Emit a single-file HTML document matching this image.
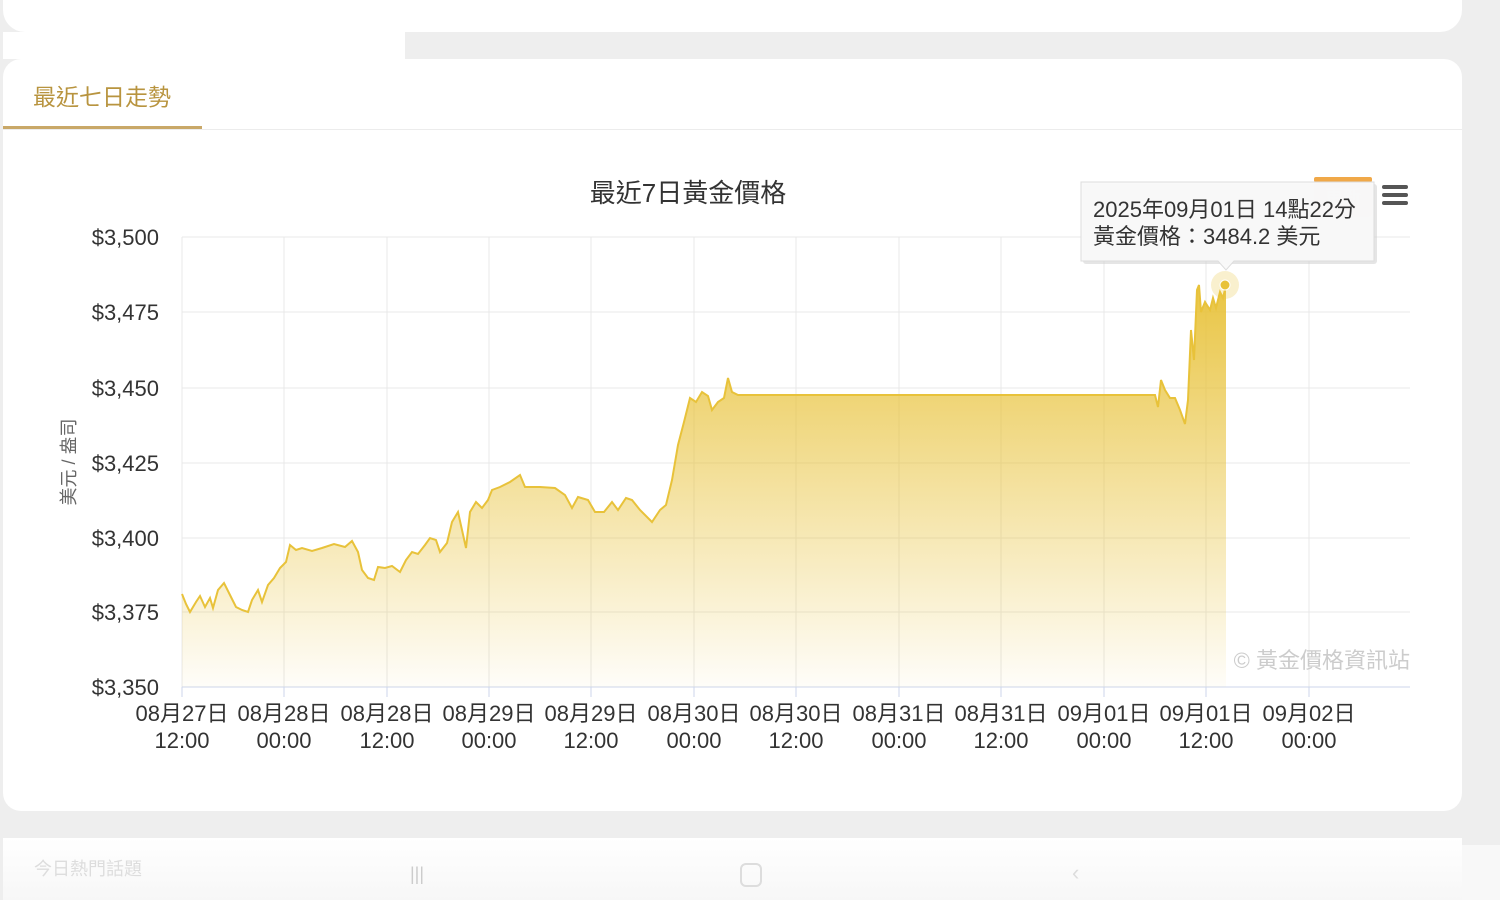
<!DOCTYPE html>
<html><head><meta charset="utf-8">
<style>
body{margin:0;width:1500px;height:900px;background:#eeeeee;font-family:"Liberation Sans","Noto Sans CJK TC",sans-serif;overflow:hidden;position:relative}
.top{position:absolute;left:3px;top:-20px;width:1459px;height:52px;background:#fff;border-radius:0 0 22px 22px}
.strip{position:absolute;left:3px;top:32px;width:402px;height:27px;background:#fff}
.card{position:absolute;left:3px;top:59px;width:1459px;height:752px;background:#fff;border-radius:18px}
.tab{position:absolute;left:33px;top:78px;font-size:23px;color:#b8943f;font-family:"Noto Sans CJK TC",sans-serif}
.tabline{position:absolute;left:3px;top:126px;width:199px;height:3px;background:#c9a868}
.sep{position:absolute;left:3px;top:129px;width:1459px;height:1px;background:#ececec}
.low{position:absolute;left:3px;top:838px;width:1459px;height:62px;background:linear-gradient(#fff,#f7f7f7)}
.low2{position:absolute;left:1462px;top:845px;width:38px;height:55px;background:#f8f8f8}
</style></head><body>
<div class="top"></div>
<div class="strip"></div>
<div class="card"></div>
<div class="tab">最近七日走勢</div>
<div class="tabline"></div>
<div class="sep"></div>
<div class="low"></div><div class="low2"></div>
<div style="position:absolute;left:34px;top:855px;font-size:18px;color:#ddd">今日熱門話題</div>
<div style="position:absolute;left:410px;top:864px;width:20px;height:20px;color:#ccc;font-size:18px">|||</div>
<div style="position:absolute;left:740px;top:863px;width:18px;height:20px;border:2px solid #ddd;border-radius:6px"></div>
<div style="position:absolute;left:1072px;top:860px;color:#ddd;font-size:22px">‹</div>
<svg width="1500" height="900" style="position:absolute;left:0;top:0" font-family="Liberation Sans, Noto Sans CJK TC, sans-serif">
<defs>
<linearGradient id="f" x1="0" y1="285" x2="0" y2="687" gradientUnits="userSpaceOnUse"><stop offset="0" stop-color="#e8c23a" stop-opacity="0.95"/><stop offset="1" stop-color="#e8c23a" stop-opacity="0.03"/></linearGradient></defs>
<g stroke="#e8e8e8" stroke-width="1">
<line x1="182" y1="237" x2="1410" y2="237"/><line x1="182" y1="312" x2="1410" y2="312"/><line x1="182" y1="388" x2="1410" y2="388"/><line x1="182" y1="463" x2="1410" y2="463"/><line x1="182" y1="538" x2="1410" y2="538"/><line x1="182" y1="612" x2="1410" y2="612"/>
<line x1="182" y1="237" x2="182" y2="687"/><line x1="284" y1="237" x2="284" y2="687"/><line x1="387" y1="237" x2="387" y2="687"/><line x1="489" y1="237" x2="489" y2="687"/><line x1="591" y1="237" x2="591" y2="687"/><line x1="694" y1="237" x2="694" y2="687"/><line x1="796" y1="237" x2="796" y2="687"/><line x1="899" y1="237" x2="899" y2="687"/><line x1="1001" y1="237" x2="1001" y2="687"/><line x1="1104" y1="237" x2="1104" y2="687"/><line x1="1206" y1="237" x2="1206" y2="687"/><line x1="1309" y1="237" x2="1309" y2="687"/>
</g>
<line x1="182" y1="687" x2="1410" y2="687" stroke="#ccd6eb"/>
<g stroke="#ccd6eb"><line x1="182" y1="687" x2="182" y2="697"/><line x1="284" y1="687" x2="284" y2="697"/><line x1="387" y1="687" x2="387" y2="697"/><line x1="489" y1="687" x2="489" y2="697"/><line x1="591" y1="687" x2="591" y2="697"/><line x1="694" y1="687" x2="694" y2="697"/><line x1="796" y1="687" x2="796" y2="697"/><line x1="899" y1="687" x2="899" y2="697"/><line x1="1001" y1="687" x2="1001" y2="697"/><line x1="1104" y1="687" x2="1104" y2="697"/><line x1="1206" y1="687" x2="1206" y2="697"/><line x1="1309" y1="687" x2="1309" y2="697"/></g>
<path d="M182,594 L186,604 L190,612 L196,602 L200,596 L205,607 L210,598 L213,608 L218,590 L224,583 L230,595 L236,607 L242,610 L248,612 L252,600 L258,590 L262,602 L268,585 L274,578 L280,568 L286,562 L290,545 L296,550 L302,548 L312,551 L322,548 L334,544 L345,547 L352,541 L358,552 L362,570 L368,578 L374,580 L378,567 L385,568 L392,566 L400,572 L406,560 L412,552 L418,554 L425,545 L430,538 L436,540 L440,552 L447,543 L452,522 L458,512 L462,530 L466,548 L470,512 L476,502 L482,508 L488,500 L492,490 L500,487 L510,482 L520,475 L525,487 L540,487 L555,488 L565,495 L572,508 L578,497 L588,500 L595,512 L604,512 L612,502 L618,510 L626,498 L632,500 L640,510 L652,522 L660,510 L666,505 L672,480 L678,445 L684,422 L690,398 L696,402 L702,392 L708,396 L712,410 L718,402 L724,398 L728,378 L732,392 L738,395 L1155,395 L1158,407 L1161,380 L1165,390 L1170,398 L1175,398 L1180,410 L1185,424 L1188,400 L1191,330 L1194,360 L1197,290 L1199,285 L1201,312 L1205,302 L1210,310 L1213,298 L1216,308 L1220,292 L1223,298 L1226,285 L1226,687 L182,687 Z" fill="url(#f)"/>
<path fill="none" stroke="#e8c23a" stroke-width="2" d="M182,594 L186,604 L190,612 L196,602 L200,596 L205,607 L210,598 L213,608 L218,590 L224,583 L230,595 L236,607 L242,610 L248,612 L252,600 L258,590 L262,602 L268,585 L274,578 L280,568 L286,562 L290,545 L296,550 L302,548 L312,551 L322,548 L334,544 L345,547 L352,541 L358,552 L362,570 L368,578 L374,580 L378,567 L385,568 L392,566 L400,572 L406,560 L412,552 L418,554 L425,545 L430,538 L436,540 L440,552 L447,543 L452,522 L458,512 L462,530 L466,548 L470,512 L476,502 L482,508 L488,500 L492,490 L500,487 L510,482 L520,475 L525,487 L540,487 L555,488 L565,495 L572,508 L578,497 L588,500 L595,512 L604,512 L612,502 L618,510 L626,498 L632,500 L640,510 L652,522 L660,510 L666,505 L672,480 L678,445 L684,422 L690,398 L696,402 L702,392 L708,396 L712,410 L718,402 L724,398 L728,378 L732,392 L738,395 L1155,395 L1158,407 L1161,380 L1165,390 L1170,398 L1175,398 L1180,410 L1185,424 L1188,400 L1191,330 L1194,360 L1197,290 L1199,285 L1201,312 L1205,302 L1210,310 L1213,298 L1216,308 L1220,292 L1223,298 L1226,285"/>
<circle cx="1225" cy="285" r="14" fill="#e8c23a" opacity="0.25"/>
<circle cx="1225" cy="285" r="5" fill="#e8c23a" stroke="#fff" stroke-width="1"/>
<g font-size="22" fill="#333" text-anchor="end">
<text x="159" y="245">$3,500</text><text x="159" y="320">$3,475</text><text x="159" y="396">$3,450</text><text x="159" y="471">$3,425</text><text x="159" y="546">$3,400</text><text x="159" y="620">$3,375</text><text x="159" y="695">$3,350</text></g>
<text transform="translate(75,462) rotate(-90)" font-size="18" fill="#666" text-anchor="middle">美元 / 盎司</text>
<text x="688" y="202" font-size="26" fill="#333" text-anchor="middle">最近7日黃金價格</text>
<g font-size="22" fill="#333" text-anchor="middle">
<text x="182" y="721">08月27日</text><text x="182" y="748">12:00</text>
<text x="284" y="721">08月28日</text><text x="284" y="748">00:00</text>
<text x="387" y="721">08月28日</text><text x="387" y="748">12:00</text>
<text x="489" y="721">08月29日</text><text x="489" y="748">00:00</text>
<text x="591" y="721">08月29日</text><text x="591" y="748">12:00</text>
<text x="694" y="721">08月30日</text><text x="694" y="748">00:00</text>
<text x="796" y="721">08月30日</text><text x="796" y="748">12:00</text>
<text x="899" y="721">08月31日</text><text x="899" y="748">00:00</text>
<text x="1001" y="721">08月31日</text><text x="1001" y="748">12:00</text>
<text x="1104" y="721">09月01日</text><text x="1104" y="748">00:00</text>
<text x="1206" y="721">09月01日</text><text x="1206" y="748">12:00</text>
<text x="1309" y="721">09月02日</text><text x="1309" y="748">00:00</text>
</g>
<text x="1410" y="668" font-size="22" fill="#ccc" text-anchor="end">© 黃金價格資訊站</text>
<rect x="1314" y="177" width="58" height="40" rx="4" fill="#fbe9d6"/>
<rect x="1314" y="177" width="58" height="5" rx="2" fill="#f0a848"/>
<text x="1343" y="203" font-size="18" fill="#fff" text-anchor="middle">更新</text>
<g fill="#555"><rect x="1382" y="185" width="26" height="4" rx="2"/><rect x="1382" y="193" width="26" height="4" rx="2"/><rect x="1382" y="201" width="26" height="4" rx="2"/></g>
<rect x="1083" y="184" width="294" height="80" rx="3" fill="#ccc" opacity="0.5"/>
<path d="M1081,182 H1374 V261 H1234 L1226,270 L1218,261 H1081 Z" fill="#f9f9f9" fill-opacity="0.95" stroke="#ddd"/>
<text x="1093" y="217" font-size="22" fill="#333">2025年09月01日 14點22分</text>
<text x="1093" y="244" font-size="22" fill="#333">黃金價格：3484.2 美元</text>
</svg>
</body></html>
